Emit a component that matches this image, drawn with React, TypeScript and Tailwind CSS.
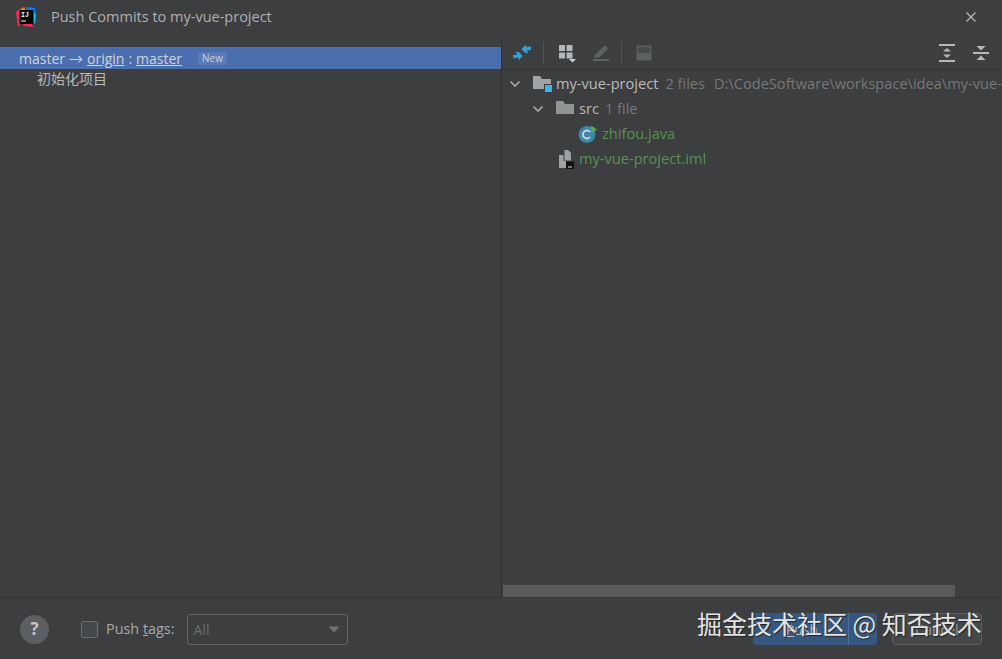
const sans = '"Open Sans","Noto Sans CJK SC",sans-serif';

function IdeaLogo() {
  return (
    <svg width="22" height="22" viewBox="0 0 22 22">
      <path d="M2 5 L9 1 L12 6 L5 12 Z" fill="#f97a12" />
      <path d="M1 6 L6 3 L7 16 L3 21 Z" fill="#fe2857" />
      <path d="M11 1 L20 2 L21 10 L13 8 Z" fill="#087cfa" />
      <path d="M3 15 L10 20 L19 21 L12 13 Z" fill="#fe2857" />
      <path d="M17 4 L21 9 L20 18 L15 15 Z" fill="#07c3f2" />
      <rect x="4.5" y="4" width="14" height="14" fill="#000" />
      <text x="6" y="11" fill="#fff" fontSize="6.5" fontWeight="700" fontFamily='"Liberation Mono",monospace'>IJ</text>
      <rect x="6" y="14.5" width="5" height="1" fill="#fff" />
    </svg>
  );
}

function Compare() {
  return (
    <svg width="20" height="18" viewBox="0 0 20 18">
      <path d="M19 2.500 V6 L14.500 6.500 L16.500 9 L13.500 9 L9.500 5 L14 0.500 L14 3 Z" fill="#389fd6" />
      <path d="M1 11 L5.500 10.500 L3.500 8 L7 8 L10.500 12 L6.500 16.500 L6.500 13.500 L1.500 14.500 Z" fill="#389fd6" />
    </svg>
  );
}

function Group() {
  return (
    <svg width="20" height="20" viewBox="0 0 20 20">
      <rect x="1" y="2" width="6" height="6" rx="0.500" fill="#b4b8ba" />
      <rect x="8.500" y="2" width="6" height="6" rx="0.500" fill="#b4b8ba" />
      <rect x="1" y="9.500" width="6" height="6" rx="0.500" fill="#b4b8ba" />
      <rect x="8.500" y="9.500" width="6" height="6" rx="0.500" fill="#b4b8ba" />
      <path d="M11 16 H18 L14.500 19.500 Z" fill="#d0d2d3" />
    </svg>
  );
}

function Pencil() {
  return (
    <svg width="18" height="18" viewBox="0 0 18 18">
      <path d="M2 12 L11 3 Q13 1 15 3 Q16.500 5 15 6 L7 13.500 H2 Z" fill="#5f6263" />
      <rect x="1" y="15" width="16" height="2" fill="#5f6263" />
    </svg>
  );
}

function Save() {
  return (
    <svg width="16" height="16" viewBox="0 0 16 16">
      <rect x="0.500" y="0.500" width="15" height="15" rx="1" fill="#5d6061" />
      <rect x="2" y="2" width="12" height="6" fill="#484b4c" />
    </svg>
  );
}

function Expand() {
  return (
    <svg width="18" height="20" viewBox="0 0 18 20">
      <rect x="1" y="1" width="16" height="2" fill="#b4b8ba" />
      <rect x="1" y="17" width="16" height="2" fill="#b4b8ba" />
      <path d="M9 5 L13 8.500 H5 Z M9 15 L13 11.500 H5 Z" fill="#b4b8ba" />
    </svg>
  );
}

function Collapse() {
  return (
    <svg width="16" height="16" viewBox="0 0 16 16">
      <rect x="0" y="7" width="16" height="2" fill="#b4b8ba" />
      <path d="M3.500 1 H12.500 L8 5.500 Z M3.500 15 H12.500 L8 10.500 Z" fill="#b4b8ba" />
    </svg>
  );
}

function Chevron() {
  return (
    <svg width="12" height="8" viewBox="0 0 12 8" fill="none">
      <path d="M1.500 1.500 L6 6 L10.500 1.500" stroke="#a8abad" strokeWidth="1.600" />
    </svg>
  );
}

function Folder({ badge }: { badge?: boolean }) {
  return (
    <svg width="20" height="18" viewBox="0 0 20 18">
      <path d="M0 1 H7 L9 4 H18 V14 H0 Z" fill="#a0a4a6" opacity={badge ? 1 : 0.85} />
      {badge && <rect x="11.500" y="9.500" width="8" height="8" fill="#3fb4e8" stroke="#3c3e40" strokeWidth="1" />}
    </svg>
  );
}

function JavaIcon() {
  return (
    <svg width="20" height="20" viewBox="0 0 20 20">
      <circle cx="9" cy="10.500" r="8.500" fill="#3a87a8" />
      <path d="M12 8 A4 4 0 1 0 12 13" stroke="#c8d8de" strokeWidth="1.800" fill="none" />
      <path d="M13 1.500 L19 5.500 L13 9.500 Z" fill="#5fa64f" />
    </svg>
  );
}

function ImlIcon() {
  return (
    <svg width="16" height="20" viewBox="0 0 16 20">
      <path d="M1 6 H5.500 V12 H8 V19 H1 Z" fill="#9ea2a4" />
      <path d="M6.500 1 L10 1 L13 4 V11.500 H6.500 Z" fill="#9ea2a4" />
      <rect x="8" y="12.500" width="8" height="7.500" fill="#111" />
      <rect x="10" y="17.500" width="4" height="1" fill="#ddd" />
    </svg>
  );
}

function TreeRow({ indent, children }: { indent: string; children: React.ReactNode }) {
  return <div className={`flex h-[25px] items-center whitespace-nowrap ${indent}`}>{children}</div>;
}

export default function App() {
  return (
    <div
      className="relative flex h-[659px] w-[1002px] flex-col overflow-hidden bg-[#3c3e40] text-[14px] text-[#bbbbbb]"
      style={{ fontFamily: sans }}
    >
      <header className="flex h-[34px] shrink-0 items-center pl-[15px] pr-[25px]">
        <IdeaLogo />
        <span className="ml-[14px] text-[14.5px] text-[#b0b0b0]">Push Commits to my-vue-project</span>
        <svg className="ml-auto" width="12" height="12" viewBox="0 0 12 12" fill="none">
          <path d="M1.500 1.500 L10.500 10.500 M10.500 1.500 L1.500 10.500" stroke="#b8b8b8" strokeWidth="1.200" />
        </svg>
      </header>

      <main className="flex min-h-0 flex-1 pt-[2px]">
        <section className="w-[502px] shrink-0 border-r border-[#2f3132] pt-[11px]">
          <div className="flex h-[22px] items-center whitespace-nowrap bg-[#4b6eaf] pl-[19px] text-[#d0d4dc]">
            <span>master</span>
            <span className="mx-[4px]">→</span>
            <span className="underline">origin</span>
            <span className="mx-[4px]">:</span>
            <span className="underline">master</span>
            <span className="ml-[16px] rounded-[3px] bg-[#5a7bb8] px-[4px] text-[10px] leading-[13px] text-[#c9d2e2]">New</span>
          </div>
          <div className="flex h-[19px] items-center pl-[37px] text-[14px] text-[#b8b8b8]">初始化项目</div>
        </section>

        <section className="flex min-w-0 flex-1 flex-col">
          <div className="flex h-[34px] shrink-0 items-center border-b border-[#323436] pl-[10px] pr-[13px]">
            <Compare />
            <div className="ml-[11px] mr-[14px] h-[22px] w-px bg-[#515455]" />
            <Group />
            <div className="ml-[14px]"><Pencil /></div>
            <div className="ml-[11px] mr-[14px] h-[22px] w-px bg-[#515455]" />
            <Save />
            <div className="ml-auto"><Expand /></div>
            <div className="ml-[17px]"><Collapse /></div>
          </div>

          <div className="min-h-0 flex-1 overflow-hidden pt-[1px] text-[14.6px]">
            <TreeRow indent="pl-[7px]">
              <Chevron />
              <div className="ml-[12px] mr-[3px]"><Folder badge /></div>
              <span className="text-[#bbbbbb]">my-vue-project</span>
              <span className="ml-[7px] text-[#787878]">2 files</span>
              <span className="ml-[9px] text-[#787878]">D:\CodeSoftware\workspace\idea\my-vue-</span>
            </TreeRow>
            <TreeRow indent="pl-[30px]">
              <Chevron />
              <div className="ml-[12px] mr-[3px]"><Folder /></div>
              <span className="text-[#bbbbbb]">src</span>
              <span className="ml-[6px] text-[#787878]">1 file</span>
            </TreeRow>
            <TreeRow indent="pl-[76px]">
              <JavaIcon />
              <span className="ml-[4px] text-[#5a8f52]">zhifou.java</span>
            </TreeRow>
            <TreeRow indent="pl-[56px]">
              <ImlIcon />
              <span className="ml-[5px] text-[#5a8f52]">my-vue-project.iml</span>
            </TreeRow>
          </div>

          <div className="h-[12px] shrink-0 pl-[1px]">
            <div className="h-full w-[452px] bg-[#585a5c]" />
          </div>
        </section>
      </main>

      <footer className="flex h-[62px] shrink-0 items-center border-t border-[#323436] pl-[20px] pr-[20px] pt-[1px]">
        <div className="flex h-[29px] w-[29px] items-center justify-center rounded-full bg-[#5c5f61] text-[17px] font-bold text-[#c4c6c7]">?</div>
        <div className="ml-[32px] h-[17px] w-[17px] rounded-[2px] border border-[#6b6e70] bg-[#43494a]" />
        <span className="ml-[8px] text-[14.4px] text-[#a9a9a9]">
          Push <span className="underline">t</span>ags:
        </span>
        <div className="ml-[12px] flex h-[31px] w-[161px] items-center justify-between rounded-[3px] border border-[#646464] pl-[6px] pr-[7px] text-[#6f6f6f]">
          <span>All</span>
          <svg width="12" height="7" viewBox="0 0 12 7"><path d="M0.500 0.500 H11.500 L6 6.500 Z" fill="#6f7173" /></svg>
        </div>
        <div className="ml-auto flex items-center gap-[15px]">
          <div className="flex h-[32px] w-[124px] items-center rounded-[4px] bg-[#365880] text-[#bbbbbb]">
            <span className="flex-1 pl-[3px] text-center"><span className="underline">P</span>ush</span>
            <div className="h-full w-px bg-[#4c709a]" />
            <div className="w-[28px]" />
          </div>
          <div className="flex h-[32px] w-[90px] items-center justify-center rounded-[4px] border border-[#5e6060] bg-[#45484a] text-[#999999]">Cancel</div>
        </div>
      </footer>

      <div
        className="absolute left-[697px] top-[606px] whitespace-nowrap text-[25px] leading-[34px] text-[#e4e4e4] [text-shadow:1px_1px_1px_#222]"
        style={{ fontFamily: '"Noto Sans CJK SC",sans-serif' }}
      >
        掘金技术社区 @ 知否技术
      </div>
    </div>
  );
}
